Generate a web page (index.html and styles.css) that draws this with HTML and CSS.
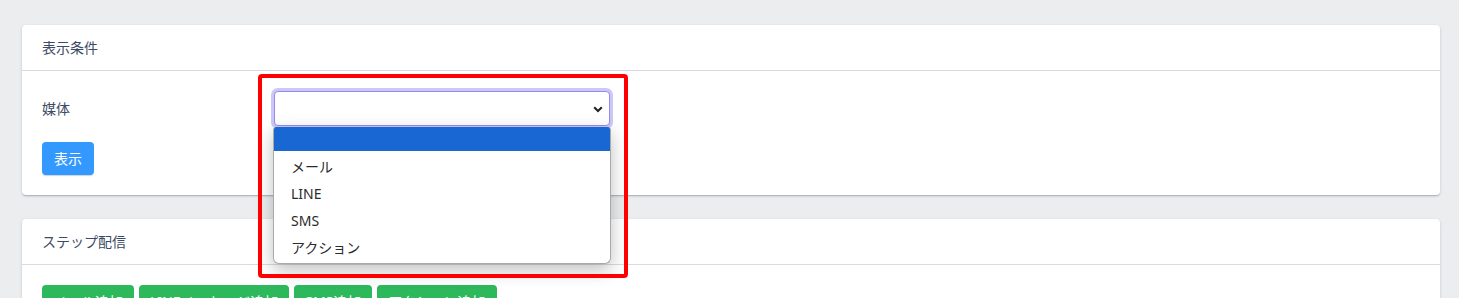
FILE: index.html
```html
<!DOCTYPE html>
<html lang="ja">
<head>
  <meta charset="UTF-8" />
  <meta name="viewport" content="width=device-width, initial-scale=1.0" />
  <title>ステップ配信</title>
  <link rel="stylesheet" href="styles.css">
</head>
<body>
  <div class="page">
    <div class="card">
      <div class="card-header">表示条件</div>
      <div class="card-body">
        <div class="form-row">
          <label class="form-label">媒体</label>
          <div class="select-wrap">
            <div class="select is-focused">
              <svg class="chevron" width="10" height="7" viewBox="0 0 10 7">
                <path d="M1.2 1.2 5 5 8.8 1.2" fill="none" stroke="#222" stroke-width="2"/>
              </svg>
            </div>
            <ul class="select-popup">
              <li class="active"></li>
              <li>メール</li>
              <li>LINE</li>
              <li>SMS</li>
              <li>アクション</li>
            </ul>
          </div>
        </div>
        <button class="btn btn-info">表示</button>
      </div>
    </div>

    <div class="card">
      <div class="card-header">ステップ配信</div>
      <div class="card-body">
        <div class="btn-row">
          <button class="btn btn-success">メール追加</button>
          <button class="btn btn-success">LINEメッセージ追加</button>
          <button class="btn btn-success">SMS追加</button>
          <button class="btn btn-success">アクション追加</button>
        </div>
      </div>
    </div>

    <div class="annotation"></div>
  </div>
</body>
</html>
```

FILE: styles.css
```css
body {
  margin: 0;
  background-color: #ebedef;
  color: #3c4b64;
  font-family: "Noto Sans", "Noto Sans CJK JP", sans-serif;
  font-size: 14px;
  line-height: 21px;
  height: 298px;
  overflow: hidden;
}
.page {
  position: relative;
  padding: 25px 19px 0 22px;
}
.card {
  background: #fff;
  border-radius: 4px;
  margin-bottom: 24px;
  box-shadow: 0 1px 1px 0 rgba(60,75,100,.14), 0 2px 1px -1px rgba(60,75,100,.12), 0 1px 3px 0 rgba(60,75,100,.2);
}
.card-header {
  height: 21px;
  padding: 12px 20px;
  border-bottom: 1px solid #d8dbe0;
}
.card-body {
  padding: 20px;
}
.form-row {
  display: grid;
  grid-template-columns: 232px 336px;
  margin-bottom: 16px;
}
.form-label {
  padding-top: 7px;
}
.select-wrap {
  position: relative;
}
.select {
  height: 33px;
  border: 1px solid #d8dbe0;
  border-radius: 4px;
  background: #fff;
  position: relative;
}
.select.is-focused {
  border-color: #958bef;
  box-shadow: 0 0 0 3px rgba(50,31,219,.25);
}
.chevron {
  position: absolute;
  right: 6px;
  top: 14px;
}
.select-popup {
  position: absolute;
  top: 36px;
  left: -1px;
  width: 336px;
  margin: 0;
  padding: 0 0 2px;
  list-style: none;
  background: #fff;
  border: 1px solid #a9a9a9;
  border-top: none;
  border-radius: 3px 3px 6px 6px;
  box-shadow: 0 6px 18px rgba(0,0,0,.25);
  overflow: hidden;
  z-index: 5;
  color: #2b2b2b;
}
.select-popup li {
  height: 27px;
  line-height: 27px;
  padding-left: 17px;
}
.select-popup li.active {
  height: 24px;
  margin-bottom: 2px;
  background: #1967d2;
}
.btn {
  font-family: inherit;
  font-size: 14px;
  line-height: 21px;
  padding: 6px 11px;
  border: none;
  border-radius: 4px;
  color: #fff;
  cursor: pointer;
}
.btn-info {
  padding: 6px 12px;
  background-color: #39f;
  box-shadow: 0 1px 1px 0 rgba(60,75,100,.14), 0 2px 1px -1px rgba(60,75,100,.12);
}
.btn-success {
  background-color: #2eb85c;
}
.btn-row {
  display: flex;
  gap: 5px;
}
.annotation {
  position: absolute;
  left: 258px;
  top: 74px;
  width: 362px;
  height: 196px;
  border: 4px solid #ff0000;
  border-radius: 4px;
  z-index: 10;
}
```
